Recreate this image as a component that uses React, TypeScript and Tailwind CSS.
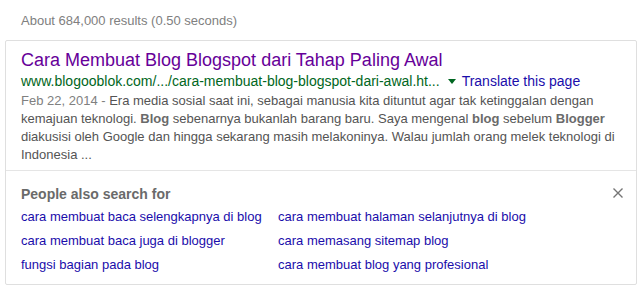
const related = [
    ['cara membuat baca selengkapnya di blog', 'cara membuat halaman selanjutnya di blog'],
    ['cara membuat baca juga di blogger', 'cara memasang sitemap blog'],
    ['fungsi bagian pada blog', 'cara membuat blog yang profesional'],
];

export default function App() {
    return (
        <div className="w-[644px] h-[291px] bg-white font-['Liberation_Sans',Arial,sans-serif] overflow-hidden">
            {/* Result stats */}
            <div className="pt-[12px] pl-[21px] text-[13px] leading-[18px] text-[#808080]">
                About 684,000 results (0.50 seconds)
            </div>

            {/* Result card */}
            <div className="mt-[10px] ml-[5px] w-[632px] border border-[#dfdfdf] rounded-[2px]">
                <div className="px-[15px] pt-[8px] pb-[6px] border-b border-[#e5e5e5]">
                    <a className="block text-[18px] leading-[22px] text-[#660099]">
                        Cara Membuat Blog Blogspot dari Tahap Paling Awal
                    </a>
                    <div className="flex items-center text-[14px] leading-[20px]">
                        <span className="text-[#006621]">www.blogooblok.com/.../cara-membuat-blog-blogspot-dari-awal.ht...</span>
                        <span className="ml-[8px] mr-[6px] w-0 h-0 border-l-[4px] border-r-[4px] border-t-[5px] border-l-transparent border-r-transparent border-t-[#006621]" />
                        <span className="text-[#1a0dab]">Translate this page</span>
                    </div>
                    <p className="mt-[1px] text-[13px] leading-[18px] text-[#545454] whitespace-nowrap">
                        <span className="text-[#808080]">Feb 22, 2014 - </span>Era media sosial saat ini, sebagai manusia kita dituntut agar tak ketinggalan dengan
                        <br />
                        kemajuan teknologi. <b className="text-[#6a6a6a]">Blog</b> sebenarnya bukanlah barang baru. Saya mengenal <b className="text-[#6a6a6a]">blog</b> sebelum <b className="text-[#6a6a6a]">Blogger</b>
                        <br />
                        diakusisi oleh Google dan hingga sekarang masih melakoninya. Walau jumlah orang melek teknologi di
                        <br />
                        Indonesia ...
                    </p>
                </div>

                {/* People also search for */}
                <div className="px-[15px] pt-[13px] pb-[7px]">
                    <div className="flex items-center justify-between">
                        <span className="text-[14px] leading-[20px] font-bold text-[#6a6a6a]">People also search for</span>
                        <svg viewBox="0 0 10 10" className="w-[10px] h-[10px] mr-[-2px] mb-[2px]" stroke="#757575" strokeWidth="1.4">
                            <path d="M0.5 0.5L9.5 9.5M9.5 0.5L0.5 9.5" />
                        </svg>
                    </div>
                    <div className="mt-[1px] grid grid-cols-[257px_1fr] text-[13px] leading-[24px] text-[#1a0dab]">
                        {related.map(([a, b]) => (
                            <div key={a} className="contents">
                                <a>{a}</a>
                                <a>{b}</a>
                            </div>
                        ))}
                    </div>
                </div>
            </div>
        </div>
    );
}
